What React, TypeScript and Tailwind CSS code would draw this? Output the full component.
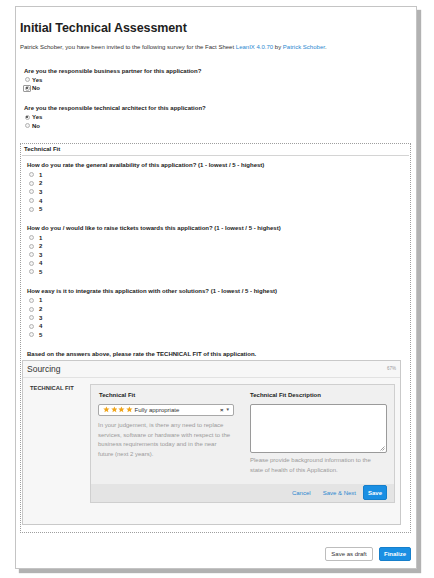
import React from "react";

function Radio({ checked = false, focus = false }: { checked?: boolean; focus?: boolean }) {
  return (
    <span
      className={
        focus
          ? "flex h-[7px] w-[8px] shrink-0 items-center justify-center rounded-[1px] border border-[#9a9a9a]"
          : "flex h-[7px] w-[8px] shrink-0 items-center justify-center"
      }
    >
      <span className="flex h-[5px] w-[5px] items-center justify-center rounded-full border border-[#b3b3b3] bg-[#f4f4f4]">
        {checked && <span className="h-[2px] w-[2px] rounded-full bg-[#333]" />}
      </span>
    </span>
  );
}

function Star() {
  return (
    <svg width="6.8" height="6.8" viewBox="0 0 24 24" className="shrink-0">
      <polygon
        points="12,1.5 15.2,8.6 23,9.2 17,14.3 18.9,22 12,17.8 5.1,22 7,14.3 1,9.2 8.8,8.6"
        fill="#f0a419"
      />
    </svg>
  );
}

function Question({ label, first = false }: { label: string; first?: boolean }) {
  return (
    <div className={first ? "" : "mt-[10.7px]"}>
      <div className="h-[8px] text-[6px] font-bold leading-[8px] text-[#222]">{label}</div>
      <div className="mt-[1.2px]">
        {[1, 2, 3, 4, 5].map((n) => (
          <div key={n} className="flex h-[8.6px] items-center gap-[4px]">
            <Radio />
            <span className="text-[6px] font-bold leading-[8px] text-[#222]">{n}</span>
          </div>
        ))}
      </div>
    </div>
  );
}

export default function App() {
  return (
    <div className="min-h-[578px] w-[434px] bg-white pl-[15px] pt-[6px] font-['Liberation_Sans',Arial,sans-serif] text-[#222]">
      <div className="flex h-[563px] w-[402px] flex-col border border-[#c4c4c4] bg-white pl-[4px] pr-[5px] shadow-[4px_4px_1px_rgba(0,0,0,0.3)]">
        {/* Title */}
        <div className="mt-[13px] h-[16px] text-[12.5px] font-bold leading-[16px] tracking-[-0.1px] text-[#1e1e1e]">
          Initial Technical Assessment
        </div>
        <div className="mt-[6.5px] h-[8px] text-[6px] leading-[8px] text-[#333]">
          Patrick Schober, you have been invited to the following survey for the Fact Sheet{" "}
          <span className="text-[#2a87d0]">LeanIX 4.0.70</span> by{" "}
          <span className="text-[#2a87d0]">Patrick Schober</span>.
        </div>

        {/* Q1 */}
        <div className="ml-[4px] mt-[16px] h-[8px] text-[6px] font-bold leading-[8px]">
          Are you the responsible business partner for this application?
        </div>
        <div className="mt-[1px] pl-[3px]">
          <div className="flex h-[8.5px] items-center gap-[1px]">
            <Radio />
            <span className="text-[6px] font-bold leading-[8px]">Yes</span>
          </div>
          <div className="flex h-[8.5px] items-center gap-[1px]">
            <Radio checked focus />
            <span className="text-[6px] font-bold leading-[8px]">No</span>
          </div>
        </div>

        {/* Q2 */}
        <div className="ml-[4px] mt-[11.5px] h-[8px] text-[6px] font-bold leading-[8px]">
          Are you the responsible technical architect for this application?
        </div>
        <div className="mt-[0.75px] pl-[3px]">
          <div className="flex h-[8.5px] items-center gap-[1px]">
            <Radio checked />
            <span className="text-[6px] font-bold leading-[8px]">Yes</span>
          </div>
          <div className="flex h-[8.5px] items-center gap-[1px]">
            <Radio />
            <span className="text-[6px] font-bold leading-[8px]">No</span>
          </div>
        </div>

        {/* Dotted section */}
        <div className="mt-[13px] border border-dotted border-[#9e9e9e]">
          <div className="mx-[1px] h-[12px] border-b border-[#d4d4d4] px-[2px] text-[6px] font-bold leading-[11px]">
            Technical Fit
          </div>
          <div className="mt-[5.5px] pl-[6px]">
            <Question first label="How do you rate the general availability of this application? (1 - lowest / 5 - highest)" />
            <Question label="How do you / would like to raise tickets towards this application? (1 - lowest / 5 - highest)" />
            <Question label="How easy is it to integrate this application with other solutions? (1 - lowest / 5 - highest)" />
            <div className="mt-[10.7px] h-[8px] text-[6px] font-bold leading-[8px]">
              Based on the answers above, please rate the TECHNICAL FIT of this application.
            </div>
          </div>

          {/* Sourcing box */}
          <div className="mb-[7px] ml-[1px] mr-[9px] mt-[2px] border border-[#c9c9c9] bg-[#f7f7f7]">
            <div className="flex h-[17px] items-center justify-between border-b border-[#e2e2e2] pl-[4px] pr-[4px]">
              <span className="text-[8.5px] leading-[16px] text-[#333]">Sourcing</span>
              <span className="text-[4.5px] leading-[6px] text-[#999]">67%</span>
            </div>
            <div className="flex pb-[21px] pl-[7px] pr-[5px] pt-[6px]">
              <div className="h-[8px] w-[60px] shrink-0 text-[5.8px] font-bold leading-[8px] text-[#333]">
                TECHNICAL FIT
              </div>
              <div className="flex flex-1 flex-col border border-[#cfcfcf] bg-[#f0f0f0]">
                <div className="flex h-[99px] gap-[16px] pl-[7px] pr-[6px] pt-[6px]">
                  {/* Left column */}
                  <div className="w-[136px] shrink-0">
                    <div className="h-[8px] pl-[1px] text-[6px] font-bold leading-[8px] text-[#222]">Technical Fit</div>
                    <div className="mt-[5px] flex h-[12px] items-center rounded-[2px] border border-[#a8a8a8] bg-white pl-[4px] pr-[3px]">
                      <div className="flex items-center gap-[0.8px]">
                        <Star />
                        <Star />
                        <Star />
                        <Star />
                      </div>
                      <span className="ml-[2px] text-[6px] leading-[8px] text-[#333]">Fully appropriate</span>
                      <span className="ml-auto text-[6px] font-bold leading-[8px] text-[#333]">×</span>
                      <span className="ml-[2px] text-[4.5px] leading-[8px] text-[#555]">▼</span>
                    </div>
                    <div className="mt-[5px] text-[6px] leading-[9.8px] text-[#9a9a9a]">
                      In your judgement, is there any need to replace
                      <br />
                      services, software or hardware with respect to the
                      <br />
                      business requirements today and in the near
                      <br />
                      future (next 2 years).
                    </div>
                  </div>
                  {/* Right column */}
                  <div className="w-[137px] shrink-0">
                    <div className="h-[8px] text-[6px] font-bold leading-[8px] text-[#222]">Technical Fit Description</div>
                    <div className="relative mt-[5px] h-[49px] rounded-[2px] border border-[#9a9a9a] bg-white">
                      <svg width="5" height="5" viewBox="0 0 5 5" className="absolute bottom-[1px] right-[1px]">
                        <line x1="0.5" y1="4.5" x2="4.5" y2="0.5" stroke="#777" strokeWidth="0.7" />
                        <line x1="2.5" y1="4.5" x2="4.5" y2="2.5" stroke="#777" strokeWidth="0.7" />
                      </svg>
                    </div>
                    <div className="mt-[2px] text-[6px] leading-[10px] text-[#9a9a9a]">
                      Please provide background information to the
                      <br />
                      state of health of this Application.
                    </div>
                  </div>
                </div>
                <div className="flex h-[18px] items-center justify-end bg-[#e4e4e4] pr-[7px]">
                  <span className="text-[6px] leading-[8px] text-[#2a87d0]">Cancel</span>
                  <span className="ml-[12px] text-[6px] leading-[8px] text-[#2a87d0]">Save &amp; Next</span>
                  <span className="ml-[7px] flex h-[15px] w-[24px] items-center justify-center rounded-[2px] border border-[#167fcb] bg-[#1a8fe3] text-[6px] font-bold leading-[8px] text-white">
                    Save
                  </span>
                </div>
              </div>
            </div>
          </div>
        </div>

        {/* Bottom buttons */}
        <div className="mt-[14px] flex justify-end gap-[6px]">
          <span className="flex h-[14px] w-[48px] items-center justify-center rounded-[2px] border border-[#bdbdbd] bg-white text-[6px] leading-[8px] text-[#333]">
            Save as draft
          </span>
          <span className="flex h-[14px] w-[32px] items-center justify-center rounded-[2px] border border-[#167fcb] bg-[#1a8fe3] text-[6px] font-bold leading-[8px] text-white">
            Finalize
          </span>
        </div>
      </div>
    </div>
  );
}
